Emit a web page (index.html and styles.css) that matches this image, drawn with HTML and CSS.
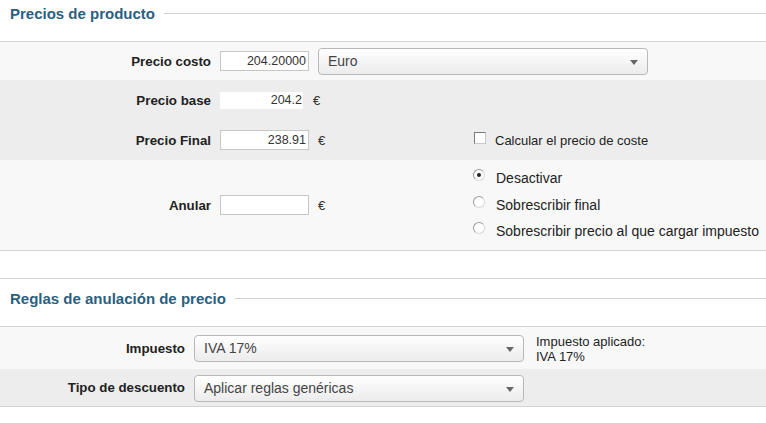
FILE: index.html
```html
<!DOCTYPE html>
<html lang="es">
<head>
<meta charset="utf-8">
<title>Precios de producto</title>
<link rel="stylesheet" href="styles.css">
</head>
<body>
<section class="sec">
  <h2 class="legend">Precios de producto</h2>
  <div class="rows">
    <div class="row light costo">
      <span class="lbl w1">Precio costo</span>
      <span class="txt">204.20000</span>
      <span class="select s-euro">Euro</span>
    </div>
    <div class="dark">
      <div class="row sub">
        <span class="lbl w1">Precio base</span>
        <span class="txt plain">204.2</span>
        <span class="cur">€</span>
      </div>
      <div class="row sub">
        <div class="left">
          <span class="lbl w1">Precio Final</span>
          <span class="txt">238.91</span>
          <span class="cur">€</span>
        </div>
        <label class="opt small"><span class="check"></span>Calcular el precio de coste</label>
      </div>
    </div>
    <div class="light anular">
      <div class="left">
        <span class="lbl w1">Anular</span>
        <span class="txt"></span>
        <span class="cur">€</span>
      </div>
      <div class="radios">
        <label class="opt"><span class="radio on"></span>Desactivar</label>
        <label class="opt"><span class="radio"></span>Sobrescribir final</label>
        <label class="opt"><span class="radio"></span>Sobrescribir precio al que cargar impuesto</label>
      </div>
    </div>
  </div>
</section>
<section class="sec sec2">
  <h2 class="legend">Reglas de anulación de precio</h2>
  <div class="rows">
    <div class="row light imp">
      <span class="lbl w2">Impuesto</span>
      <span class="select s-mid">IVA 17%</span>
      <span class="info">Impuesto aplicado:<br>IVA 17%</span>
    </div>
    <div class="row dark tipo">
      <span class="lbl w2">Tipo de descuento</span>
      <span class="select s-mid">Aplicar reglas genéricas</span>
    </div>
  </div>
</section>
</body>
</html>
```

FILE: styles.css
```css
* { box-sizing: border-box; }
body {
  margin: 0;
  background: #fff;
  font-family: "Liberation Sans", Arial, sans-serif;
  color: #222;
}
.legend {
  display: flex;
  align-items: center;
  height: 26px;
  margin: 0 0 15px 0;
  padding-left: 10px;
  font-size: 15px;
  font-weight: bold;
  color: #2b5f80;
}
.legend::after {
  content: "";
  flex: 1;
  height: 1px;
  background: #d0d0d0;
  margin-left: 9px;
}
.rows {
  border-top: 1px solid #d4d4d4;
}
.row {
  display: flex;
  align-items: center;
}
.light { background: #f8f8f8; }
.dark { background: #ededed; }
.costo { height: 38px; }
.sub { height: 40px; }
.lbl {
  font-size: 13.3px;
  font-weight: bold;
  text-align: right;
  color: #222;
}
.w1 { width: 220px; padding-right: 9px; }
.w2 { width: 194px; padding-right: 9px; }
.txt {
  display: inline-block;
  width: 89px;
  height: 20px;
  border: 1px solid #c6c6c6;
  background: #fff;
  font-size: 12.5px;
  line-height: 18px;
  text-align: right;
  padding-right: 2px;
  color: #333;
}
.txt.plain {
  width: 83px;
  height: 17px;
  border: none;
  line-height: 17px;
  padding-right: 1px;
}
.cur {
  font-size: 13px;
  margin-left: 9px;
  color: #333;
}
.txt.plain + .cur { margin-left: 10px; }
.select {
  position: relative;
  display: inline-block;
  height: 27px;
  border: 1px solid #b8b8b8;
  border-radius: 4px;
  background: linear-gradient(#ffffff, #f3f3f3 60%, #ececec);
  font-size: 14px;
  line-height: 25px;
  padding-left: 9px;
  color: #444;
}
.select::after {
  content: "";
  position: absolute;
  right: 9px;
  top: 11px;
  border-left: 4px solid transparent;
  border-right: 4px solid transparent;
  border-top: 5px solid #666;
}
.s-euro { width: 330px; margin-left: 9px; }
.s-mid { width: 330px; }
.tipo .select { margin-top: 2px; }
.left {
  display: flex;
  align-items: center;
  width: 472px;
}
.opt {
  display: flex;
  align-items: center;
  font-size: 14px;
  color: #222;
}
.opt.small { font-size: 13px; }
.check {
  width: 12px;
  height: 12px;
  border: 1px solid #7a7a7a;
  border-right-color: #c8c8c8;
  border-bottom-color: #c8c8c8;
  background: #fff;
  margin: -4px 9px 0 2px;
}
.radio {
  position: relative;
  width: 12px;
  height: 12px;
  border-radius: 50%;
  border: 1px solid #9a9a9a;
  border-right-color: #d8d8d8;
  border-bottom-color: #d8d8d8;
  background: #fff;
  margin: -6px 11px 0 1px;
}
.radio.on::after {
  content: "";
  position: absolute;
  left: 3px;
  top: 3px;
  width: 4px;
  height: 4px;
  border-radius: 50%;
  background: #222;
}
.anular {
  display: flex;
  align-items: center;
  height: 91px;
  border-bottom: 1px solid #d4d4d4;
}
.radios {
  align-self: flex-start;
  padding-top: 5px;
}
.radios .opt { height: 26.5px; }
.sec2 {
  margin-top: 27px;
  border-top: 1px solid #d4d4d4;
  padding-top: 6px;
}
.imp { height: 42px; }
.tipo { height: 38px; border-bottom: 1px solid #d4d4d4; }
.info {
  margin-left: 12px;
  font-size: 13px;
  line-height: 15px;
  color: #222;
  align-self: flex-start;
  padding-top: 7px;
}
```
